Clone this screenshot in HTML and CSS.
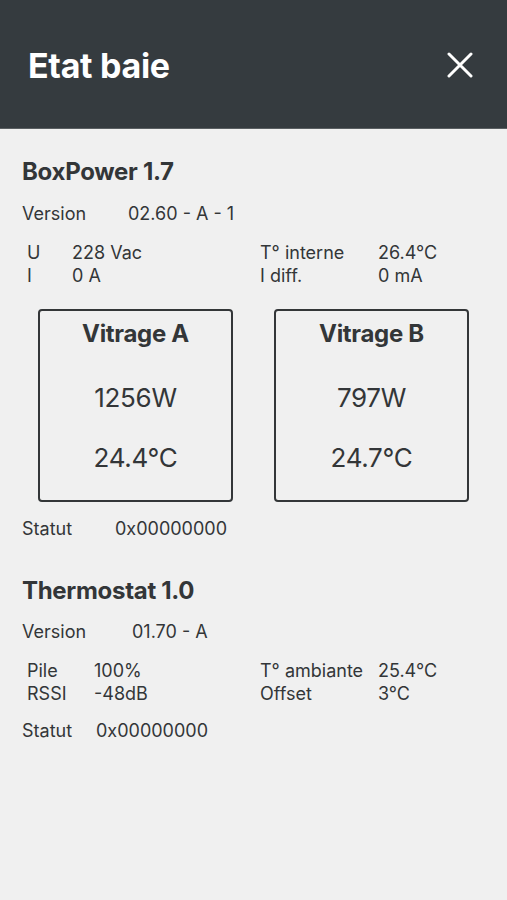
FILE: index.html
```html
<!DOCTYPE html>
<html lang="fr">
<head>
<meta charset="utf-8">
<title>Etat baie</title>
<link rel="stylesheet" href="styles.css">
</head>
<body>
<header class="topbar">
  <h1 class="topbar-title">Etat baie</h1>
  <button class="close-btn" aria-label="Fermer">
    <svg width="26" height="26" viewBox="0 0 26 26"><path d="M2 2L24 24M24 2L2 24" stroke="#fff" stroke-width="3" stroke-linecap="round"/></svg>
  </button>
</header>
<main class="content">
  <section class="device">
    <h2 class="device-title">BoxPower 1.7</h2>
    <div class="kv kv-version-box">
      <span>Version</span><span>02.60 - A - 1</span>
    </div>
    <div class="measures measures-box">
      <div class="mgroup mgroup-left-box">
        <span>U</span><span>228 Vac</span>
        <span>I</span><span>0 A</span>
      </div>
      <div class="mgroup mgroup-right">
        <span>T° interne</span><span>26.4°C</span>
        <span>I diff.</span><span>0 mA</span>
      </div>
    </div>
    <div class="panes">
      <div class="pane">
        <div class="pane-title">Vitrage A</div>
        <div class="pane-value">1256W</div>
        <div class="pane-value">24.4°C</div>
      </div>
      <div class="pane">
        <div class="pane-title">Vitrage B</div>
        <div class="pane-value">797W</div>
        <div class="pane-value">24.7°C</div>
      </div>
    </div>
    <div class="kv kv-status-box">
      <span>Statut</span><span>0x00000000</span>
    </div>
  </section>
  <section class="device device-thermo">
    <h2 class="device-title">Thermostat 1.0</h2>
    <div class="kv kv-version-thermo">
      <span>Version</span><span>01.70 - A</span>
    </div>
    <div class="measures measures-thermo">
      <div class="mgroup mgroup-left-thermo">
        <span>Pile</span><span>100%</span>
        <span>RSSI</span><span>-48dB</span>
      </div>
      <div class="mgroup mgroup-right">
        <span>T° ambiante</span><span>25.4°C</span>
        <span>Offset</span><span>3°C</span>
      </div>
    </div>
    <div class="kv kv-status-thermo">
      <span>Statut</span><span>0x00000000</span>
    </div>
  </section>
</main>
</body>
</html>
```

FILE: styles.css
```css
* { box-sizing: border-box; }
html, body {
  margin: 0;
  padding: 0;
  background: #f0f0f0;
  font-family: Inter, "Noto Sans", "Liberation Sans", sans-serif;
  color: #333638;
}
.topbar {
  height: 129px;
  background: #353b3f;
  border-bottom: 1px solid #5a5f62;
  display: flex;
  align-items: center;
  justify-content: space-between;
  padding: 2px 34px 0 28px;
}
.topbar-title {
  margin: 0;
  color: #fff;
  font-size: 34px;
  font-weight: 700;
  letter-spacing: -0.3px;
}
.close-btn {
  background: none;
  border: 0;
  padding: 0;
  width: 26px;
  height: 26px;
  display: flex;
}
.content {
  padding: 0 22px;
}
.device-title {
  margin: 0;
  font-size: 24px;
  line-height: 28px;
  font-weight: 700;
  letter-spacing: -0.3px;
  padding-top: 29px;
}
.device-thermo .device-title { padding-top: 37px; }
.kv {
  display: grid;
  font-size: 18px;
  line-height: 22px;
}
.kv-version-box { grid-template-columns: 106px 1fr; margin-top: 17px; }
.kv-status-box { grid-template-columns: 93px 1fr; margin-top: 16px; }
.kv-version-thermo { grid-template-columns: 110px 1fr; margin-top: 16px; }
.kv-status-thermo { grid-template-columns: 74px 1fr; margin-top: 15px; }
.measures {
  display: grid;
  grid-template-columns: 233px 1fr;
  padding-left: 5px;
  margin-top: 16px;
  font-size: 18px;
  line-height: 23px;
}
.mgroup { display: grid; }
.mgroup-left-box { grid-template-columns: 45px 1fr; }
.mgroup-left-thermo { grid-template-columns: 67px 1fr; }
.mgroup-right { grid-template-columns: 118px 1fr; }
.panes {
  display: flex;
  justify-content: center;
  gap: 41px;
  margin-top: 22px;
}
.pane {
  width: 195px;
  height: 193px;
  border: 2px solid #333638;
  border-radius: 4px;
  display: flex;
  flex-direction: column;
  align-items: center;
  padding-top: 9px;
}
.pane-title {
  font-size: 24px;
  line-height: 28px;
  font-weight: 700;
  letter-spacing: -0.3px;
}
.pane-value {
  font-size: 26px;
  line-height: 30px;
  margin-top: 35px;
  letter-spacing: -0.3px;
}
.pane-value + .pane-value { margin-top: 30px; }
```
